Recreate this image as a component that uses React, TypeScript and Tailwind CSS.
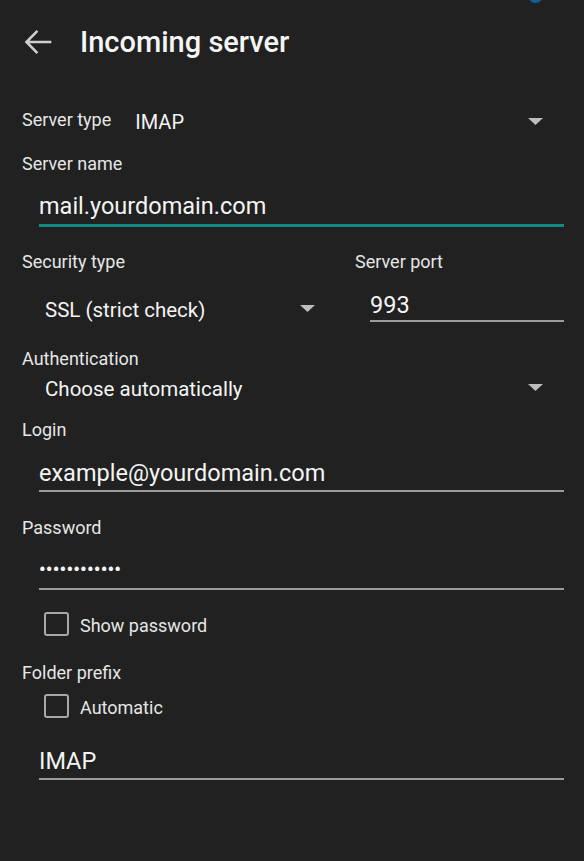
import React from "react";

const font = { fontFamily: "Roboto, 'Noto Sans', sans-serif" };

const Caret = ({ className }: { className?: string }) => (
  <svg width="15" height="7" viewBox="0 0 15 7" className={"shrink-0 " + (className || "")}>
    <path d="M0 0 H15 L7.5 7 Z" fill="#bdbdbd" />
  </svg>
);

const Label: React.FC<{ children: React.ReactNode; className?: string }> = ({ children, className }) => (
  <div className={"h-6 text-[18px] leading-6 text-[#e6e6e6] " + (className || "")}>{children}</div>
);

const Field: React.FC<{ value: React.ReactNode; active?: boolean; gap?: string; className?: string }> = ({
  value,
  active,
  gap,
  className,
}) => (
  <div className={"ml-[17px] " + (className || "")}>
    <div className="flex h-[30px] items-center text-[23.5px] leading-[30px] text-[#f4f4f4]">{value}</div>
    <div className={(gap || "mt-[2px]") + (active ? " h-[3px] bg-[#138a80]" : " h-[2px] bg-[#9c9c9c]")} />
  </div>
);

const Checkbox: React.FC<{ label: string; className?: string }> = ({ label, className }) => (
  <div className={"ml-[22px] flex items-start " + (className || "")}>
    <div className="h-[24px] w-[25px] rounded-[3px] border-[2.5px] border-[#a8a8a8]" />
    <span className="ml-[11px] mt-[2px] text-[18px] leading-6 text-[#e6e6e6]">{label}</span>
  </div>
);

export default function App() {
  return (
    <div className="relative min-h-[861px] w-full overflow-hidden bg-[#202120]" style={font}>
      {/* clipped status bar icon */}
      <div className="absolute -top-[12px] left-[528px] h-[15px] w-[15px] rounded-full bg-[#0c5f99]" />

      {/* header */}
      <div className="flex h-[84px] items-start pt-[24px]">
        <svg width="40" height="40" viewBox="0 0 24 24" className="ml-[18px] -mt-[2px]">
          <path
            d="M20 11.2H6.9l5.3-5.3-1.1-1.1L4 12l7.1 7.2 1.1-1.1-5.3-5.3H20z"
            fill="#cfcfcf"
          />
        </svg>
        <h1 className="ml-[22px] text-[29px] font-medium leading-9 text-[#f5f5f5]">Incoming server</h1>
      </div>

      <div className="pl-[22px] pr-[20px] pt-[24px]">
        {/* server type */}
        <div className="flex h-[26px] items-start">
          <Label>Server type</Label>
          <span className="ml-[24px] mt-[2px] flex-1 text-[20px] leading-6 text-[#f4f4f4]">IMAP</span>
          <Caret className="mr-[21px] mt-[10px]" />
        </div>

        <Label className="mt-[18px]">Server name</Label>
        <Field className="mt-[15px]" gap="mt-[3px]" value="mail.yourdomain.com" active />

        {/* security / port */}
        <div className="mt-[23px] flex">
          <div className="w-[333px]">
            <Label>Security type</Label>
            <div className="mt-[22px] flex h-7 items-start pl-[23px] pr-[40px]">
              <span className="flex-1 text-[20.5px] leading-7 text-[#f4f4f4]">SSL (strict check)</span>
              <Caret className="mt-[9px]" />
            </div>
          </div>
          <div className="flex-1">
            <Label>Server port</Label>
            <div className="ml-[15px] mt-[16px]">
              <div className="h-[30px] text-[23.5px] leading-[30px] text-[#f4f4f4]">993</div>
              <div className="h-[2px] bg-[#9c9c9c]" />
            </div>
          </div>
        </div>

        <Label className="mt-[23px]">Authentication</Label>
        <div className="mt-[4px] flex h-7 items-start pl-[23px]">
          <span className="flex-1 text-[20.5px] leading-7 text-[#f4f4f4]">Choose automatically</span>
          <Caret className="mr-[21px] mt-[9px]" />
        </div>

        <Label className="mt-[15px]">Login</Label>
        <Field className="mt-[16px]" value="example@yourdomain.com" />

        <Label className="mt-[24px]">Password</Label>
        <Field
          className="mt-[15px]"
          gap="mt-[3px]"
          value={<span className="text-[18.5px] font-bold tracking-[0.2px]">••••••••••••</span>}
        />

        <Checkbox className="mt-[22px]" label="Show password" />

        <Label className="mt-[23px]">Folder prefix</Label>
        <Checkbox className="mt-[9px]" label="Automatic" />

        <Field className="mt-[26px]" value="IMAP" />
      </div>
    </div>
  );
}
